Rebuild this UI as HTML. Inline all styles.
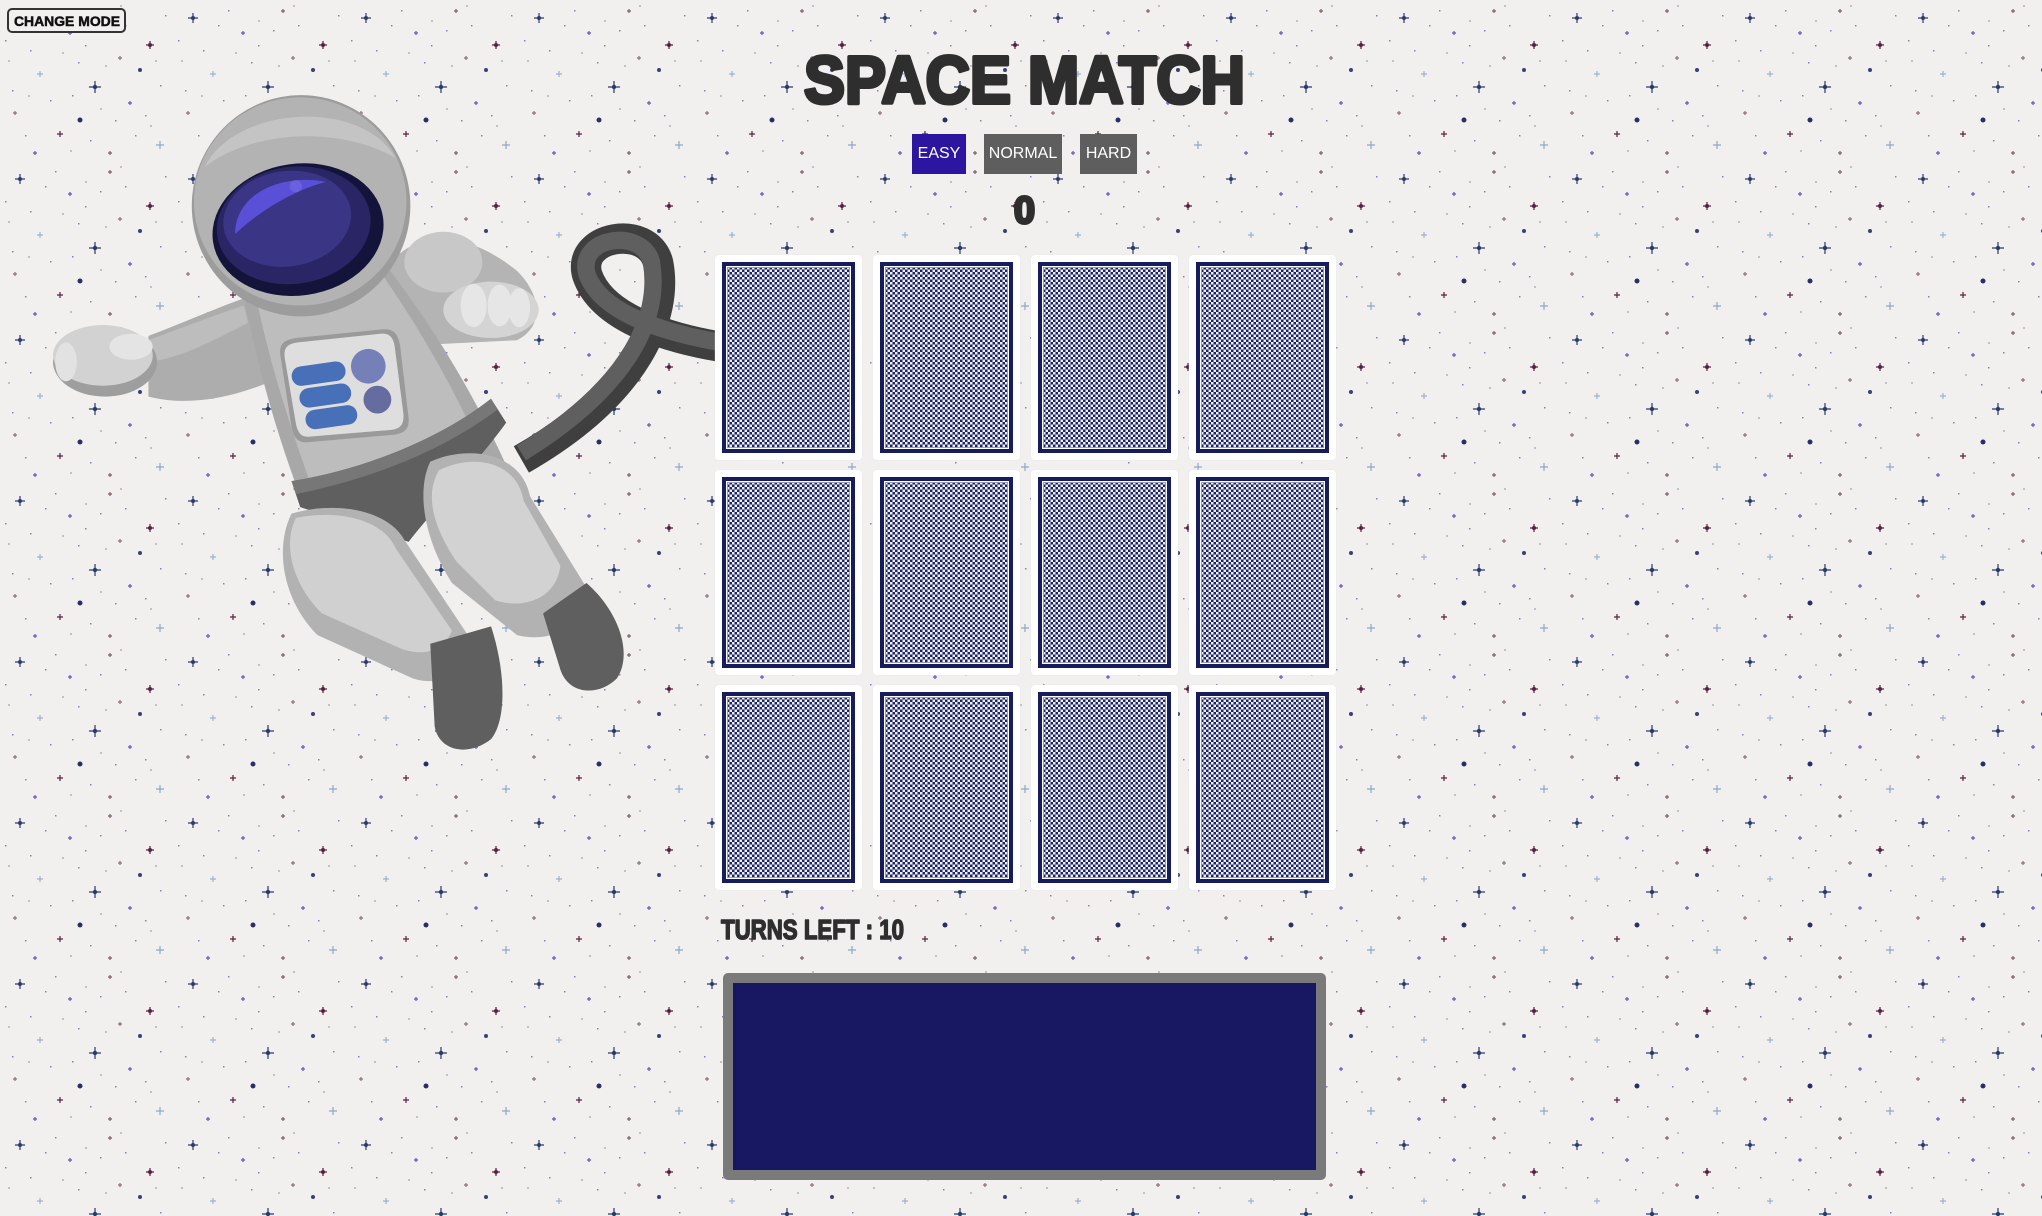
<!DOCTYPE html>
<html><head><meta charset="utf-8">
<style>
html,body{margin:0;padding:0;width:2042px;height:1216px;overflow:hidden;background:#f1f0ef;}
body{position:relative;font-family:"Liberation Sans",sans-serif;}
#bg{position:absolute;left:0;top:0;}
.txt{position:absolute;left:0;top:0;}
.btn{position:absolute;top:134px;height:40px;color:#fff;font-size:16px;line-height:40px;text-align:center;}
.card{position:absolute;width:147px;height:205px;background:#fff;border-radius:4px;box-shadow:0 0 1px #ddd;}
.card .in{position:absolute;left:7px;top:7px;right:7px;bottom:7px;background:#161c5c;}
.card .pt{position:absolute;left:4px;top:4px;right:4px;bottom:4px;border:1px solid #fff;outline:1px solid #9a9ab0;outline-offset:-2px;
background-color:#fff;background-image:repeating-conic-gradient(#1d2466 0 25%,#eef0f6 0 50%);background-size:5px 5px;}
.box{position:absolute;left:723px;top:973px;width:583px;height:187px;background:#181862;border:10px solid #7a7a7a;border-radius:5px;}
.cm{position:absolute;left:7px;top:8px;width:115px;height:21px;border:2px solid #333;border-radius:5px;background:#f1f0ef;}
</style></head><body>
<svg id="bg" width="2042" height="1216">
<defs>
<pattern id="st" width="173" height="161" patternUnits="userSpaceOnUse">
<g stroke-width="1.2">
<path d="M20 13v10M15 18h10" stroke="#2b3b6e"/><circle cx="20" cy="18" r="2" fill="#2b3b6e"/>
<path d="M70 31v4M68 33h4" stroke="#6b4fcc"/>
<path d="M110 9v4M108 11h4" stroke="#7a5f70"/>
<path d="M150 41v8M146 45h8" stroke="#5a1f3f"/><circle cx="150" cy="45" r="2" fill="#5a1f3f"/>
<path d="M40 71v6M37 74h6" stroke="#9ab3cf"/>
<path d="M95 81v12M89 87h12" stroke="#283a6c"/><circle cx="95" cy="87" r="2.2" fill="#283a6c"/>
<path d="M130 101v4M128 103h4" stroke="#6b4fcc"/>
<path d="M15 111v4M13 113h4" stroke="#8a6f80"/>
<path d="M60 131v6M57 134h6" stroke="#5a1f3f"/>
<path d="M160 141v8M156 145h8" stroke="#8aa8cc"/>
<path d="M110 151v4M108 153h4" stroke="#7a5f70"/>
<path d="M35 151v4M33 153h4" stroke="#6b4fcc"/>
<path d="M120 56v4M118 58h4" stroke="#8a6f80"/>
</g>
<circle cx="80" cy="120" r="2.5" fill="#2a2d6a"/><circle cx="140" cy="70" r="2" fill="#3a3e7e"/>
<g fill="#8a80b0">
<rect x="5" y="40" width="1.5" height="1.5"/><rect x="30" y="50" width="1.5" height="1.5"/><rect x="55" y="10" width="1.5" height="1.5"/>
<rect x="85" y="45" width="1.5" height="1.5"/><rect x="100" y="30" width="1.5" height="1.5"/><rect x="125" y="25" width="1.5" height="1.5"/>
<rect x="165" y="15" width="1.5" height="1.5"/><rect x="12" y="90" width="1.5" height="1.5"/><rect x="50" y="100" width="1.5" height="1.5"/>
<rect x="72" y="95" width="1.5" height="1.5"/><rect x="115" y="120" width="1.5" height="1.5"/><rect x="145" y="115" width="1.5" height="1.5"/>
<rect x="25" y="135" width="1.5" height="1.5"/><rect x="90" y="140" width="1.5" height="1.5"/><rect x="135" y="135" width="1.5" height="1.5"/>
<rect x="160" y="85" width="1.5" height="1.5"/><rect x="45" y="25" width="1.5" height="1.5"/><rect x="78" y="62" width="1.5" height="1.5"/>
</g>
<g fill="#c4bfcc">
<rect x="8" y="60" width="2" height="2"/><rect x="62" y="52" width="2" height="2"/><rect x="105" y="65" width="2" height="2"/>
<rect x="155" y="60" width="2" height="2"/><rect x="28" y="95" width="2" height="2"/><rect x="100" y="108" width="2" height="2"/>
<rect x="150" y="125" width="2" height="2"/><rect x="70" y="150" width="2" height="2"/><rect x="120" y="5" width="2" height="2"/>
<rect x="85" y="20" width="2" height="2"/>
</g>
</pattern>
</defs>
<rect width="2042" height="1216" fill="url(#st)"/>
</svg>

<svg style="position:absolute;left:40px;top:80px" width="680" height="680" viewBox="0 0 1568 1568">
<path d="M1568 615 C1480 600 1300 560 1262 450 C1235 360 1400 330 1425 420 C1450 540 1380 720 1110 875" fill="none" stroke="#3f3f3f" stroke-width="70"/>
<path d="M1568 605 C1480 590 1300 550 1262 450 C1235 360 1390 340 1410 420 C1430 540 1370 700 1110 860" fill="none" stroke="#5f5f5f" stroke-width="40"/>
<path d="M250 590 C330 560 420 520 480 500 L520 700 C420 740 330 750 250 730 Z" fill="#adadad"/>
<path d="M250 600 C330 570 410 540 470 520 L480 560 C400 600 330 640 250 650 Z" fill="#bdbdbd"/>
<ellipse cx="150" cy="650" rx="120" ry="80" fill="#9e9e9e"/>
<ellipse cx="145" cy="635" rx="115" ry="70" fill="#d2d2d2"/>
<ellipse cx="210" cy="615" rx="50" ry="30" fill="#e4e4e4"/>
<ellipse cx="60" cy="650" rx="25" ry="45" fill="#e2e2e2"/>
<path d="M800 430 C880 330 1000 360 1100 440 C1160 500 1160 570 1100 600 L900 610 Z" fill="#b4b4b4"/>
<ellipse cx="930" cy="420" rx="90" ry="70" fill="#c8c8c8"/>
<ellipse cx="1040" cy="530" rx="110" ry="65" fill="#d4d4d4"/>
<ellipse cx="1000" cy="520" rx="30" ry="50" fill="#e6e6e6"/><ellipse cx="1060" cy="520" rx="28" ry="48" fill="#e6e6e6"/><ellipse cx="1105" cy="525" rx="25" ry="45" fill="#e6e6e6"/>
<path d="M470 500 L800 430 C900 560 1000 720 1080 900 L600 960 C540 800 500 650 470 500 Z" fill="#a8a8a8"/>
<path d="M500 510 L790 450 C880 580 960 720 1030 880 L620 920 C570 780 530 650 500 510 Z" fill="#bdbdbd"/>
<path d="M555 640 C550 610 560 600 590 595 L790 575 C815 573 825 585 830 610 L850 780 C852 805 840 815 815 818 L620 835 C595 838 585 825 580 800 Z" fill="#9a9a9a"/>
<path d="M565 645 C560 618 570 608 595 605 L785 585 C805 583 815 593 818 615 L838 770 C840 795 830 805 808 807 L625 822 C603 825 595 815 590 792 Z" fill="#dedede"/>
<rect x="580" y="655" width="125" height="45" rx="22" fill="#4870b8" transform="rotate(-8 640 678)"/>
<rect x="598" y="705" width="120" height="45" rx="22" fill="#4870b8" transform="rotate(-8 658 728)"/>
<rect x="612" y="755" width="120" height="45" rx="22" fill="#4870b8" transform="rotate(-8 672 778)"/>
<circle cx="757" cy="660" r="40" fill="#7680b8"/><circle cx="778" cy="737" r="32" fill="#646ca0"/>
<path d="M580 925 C740 900 920 830 1040 735 L1075 790 C1010 880 900 1000 850 1065 L600 985 Z" fill="#5f5f5f"/>
<path d="M580 925 C740 900 920 830 1040 735 L1055 760 C920 860 760 920 590 955 Z" fill="#777"/>
<path d="M900 880 C990 840 1110 860 1130 960 L1260 1170 C1260 1260 1180 1300 1100 1280 L950 1160 C880 1050 870 940 900 880 Z" fill="#b2b2b2"/>
<path d="M920 900 C1000 860 1100 880 1115 970 L1200 1120 C1190 1200 1110 1220 1050 1200 L960 1110 C900 1020 890 950 920 900 Z" fill="#d2d2d2"/>
<path d="M1160 1230 L1260 1160 C1330 1220 1370 1320 1330 1380 C1290 1420 1220 1420 1200 1360 Z" fill="#5f5f5f"/>
<path d="M580 1000 C680 970 800 990 840 1060 L1000 1300 C1000 1370 920 1400 860 1380 L640 1280 C560 1200 540 1080 580 1000 Z" fill="#b2b2b2"/>
<path d="M590 1010 C680 990 790 1010 820 1080 L950 1270 C930 1320 880 1330 830 1310 L650 1230 C580 1160 560 1070 590 1010 Z" fill="#d0d0d0"/>
<path d="M900 1300 L1040 1260 C1070 1350 1080 1470 1040 1520 C990 1560 920 1550 910 1490 Z" fill="#5f5f5f"/>
<ellipse cx="602" cy="290" rx="252" ry="255" fill="#9c9c9c"/>
<ellipse cx="600" cy="280" rx="245" ry="240" fill="#b3b3b3"/>
<path d="M380 200 C450 60 740 40 820 180 C700 110 500 110 380 200 Z" fill="#c4c4c4"/>
<ellipse cx="595" cy="345" rx="198" ry="152" fill="#14143a" transform="rotate(-8 595 345)"/>
<ellipse cx="585" cy="335" rx="178" ry="135" fill="#2a2565" transform="rotate(-8 585 335)"/>
<ellipse cx="570" cy="320" rx="148" ry="110" fill="#3b3585" transform="rotate(-8 570 320)"/>
<path d="M450 355 C450 260 560 215 660 235 C600 250 520 290 450 355 Z" fill="#5a50d8"/>
<circle cx="590" cy="245" r="14" fill="#6a60e0"/>
</svg>

<div class="cm"></div>
<div class="btn" style="left:912px;width:54px;background:#2c159f;">EASY</div>
<div class="btn" style="left:984px;width:78px;background:#5e5e5e;">NORMAL</div>
<div class="btn" style="left:1080px;width:57px;background:#5e5e5e;">HARD</div>

<div class="card" style="left:715px;top:255px"><div class="in"><div class="pt"></div></div></div>
<div class="card" style="left:873px;top:255px"><div class="in"><div class="pt"></div></div></div>
<div class="card" style="left:1031px;top:255px"><div class="in"><div class="pt"></div></div></div>
<div class="card" style="left:1189px;top:255px"><div class="in"><div class="pt"></div></div></div>
<div class="card" style="left:715px;top:470px"><div class="in"><div class="pt"></div></div></div>
<div class="card" style="left:873px;top:470px"><div class="in"><div class="pt"></div></div></div>
<div class="card" style="left:1031px;top:470px"><div class="in"><div class="pt"></div></div></div>
<div class="card" style="left:1189px;top:470px"><div class="in"><div class="pt"></div></div></div>
<div class="card" style="left:715px;top:685px"><div class="in"><div class="pt"></div></div></div>
<div class="card" style="left:873px;top:685px"><div class="in"><div class="pt"></div></div></div>
<div class="card" style="left:1031px;top:685px"><div class="in"><div class="pt"></div></div></div>
<div class="card" style="left:1189px;top:685px"><div class="in"><div class="pt"></div></div></div>

<div class="box"></div>

<svg class="txt" width="2042" height="1216" style="font-family:'Liberation Sans',sans-serif;font-weight:bold;">
<text x="804" y="103" font-size="67" textLength="441" lengthAdjust="spacingAndGlyphs" fill="#2e2e2e" stroke="#2e2e2e" stroke-width="4" stroke-linejoin="round">SPACE MATCH</text>
<text x="1014" y="223" font-size="38" textLength="21" lengthAdjust="spacingAndGlyphs" fill="#2e2e2e" stroke="#2e2e2e" stroke-width="3" stroke-linejoin="round">0</text>
<text x="721" y="939" font-size="28" textLength="183" lengthAdjust="spacingAndGlyphs" fill="#2e2e2e" stroke="#2e2e2e" stroke-width="1.5" stroke-linejoin="round">TURNS LEFT : 10</text>
<text x="14" y="26" font-size="14" textLength="106" lengthAdjust="spacingAndGlyphs" fill="#111" stroke="#111" stroke-width="0.5">CHANGE MODE</text>
</svg>
</body></html>
